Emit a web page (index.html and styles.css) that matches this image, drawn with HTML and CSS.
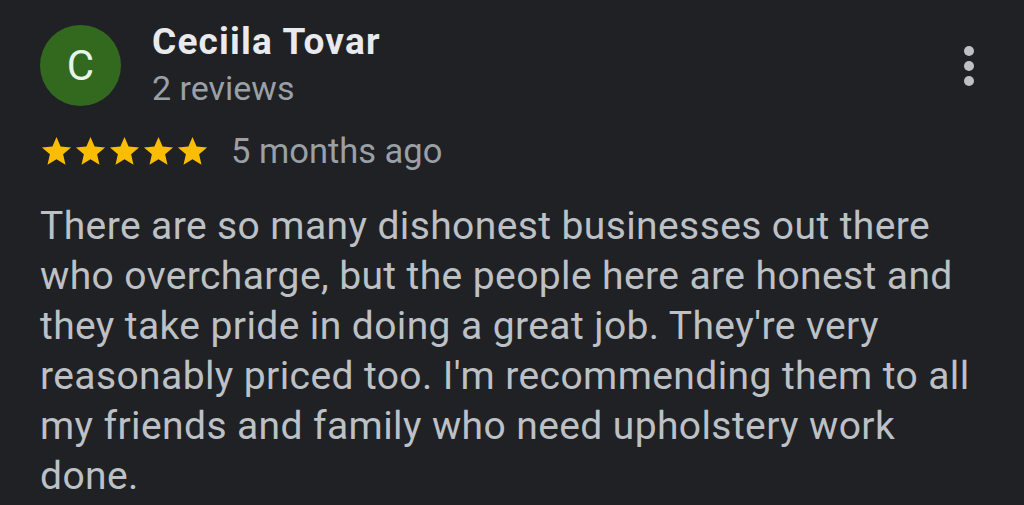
FILE: index.html
```html
<!DOCTYPE html>
<html>
<head>
<meta charset="utf-8">
<link rel="stylesheet" href="styles.css">
</head>
<body>
<div class="review">
  <div class="header">
    <div class="avatar">C</div>
    <div class="who">
      <div class="name">Ceciila Tovar</div>
      <div class="count">2 reviews</div>
    </div>
    <div class="more"><span></span><span></span><span></span></div>
  </div>
  <div class="meta">
    <div class="stars">
      <svg viewBox="0 0 24 24"><path d="M12 17.27L18.18 21l-1.64-7.03L22 9.24l-7.19-.61L12 2 9.19 8.63 2 9.24l5.46 4.73L5.82 21z"/></svg>
      <svg viewBox="0 0 24 24"><path d="M12 17.27L18.18 21l-1.64-7.03L22 9.24l-7.19-.61L12 2 9.19 8.63 2 9.24l5.46 4.73L5.82 21z"/></svg>
      <svg viewBox="0 0 24 24"><path d="M12 17.27L18.18 21l-1.64-7.03L22 9.24l-7.19-.61L12 2 9.19 8.63 2 9.24l5.46 4.73L5.82 21z"/></svg>
      <svg viewBox="0 0 24 24"><path d="M12 17.27L18.18 21l-1.64-7.03L22 9.24l-7.19-.61L12 2 9.19 8.63 2 9.24l5.46 4.73L5.82 21z"/></svg>
      <svg viewBox="0 0 24 24"><path d="M12 17.27L18.18 21l-1.64-7.03L22 9.24l-7.19-.61L12 2 9.19 8.63 2 9.24l5.46 4.73L5.82 21z"/></svg>
    </div>
    <span class="ago">5 months ago</span>
  </div>
  <p class="text">There are so many dishonest businesses out there who overcharge, but the people here are honest and they take pride in doing a great job. They're very reasonably priced too. I'm recommending them to all my friends and family who need upholstery work done.</p>
</div>
</body>
</html>
```
FILE: styles.css
```css
html, body {
  margin: 0;
  padding: 0;
  background: #202124;
  height: 100%;
  overflow: hidden;
}
body {
  font-family: Roboto, "Liberation Sans", sans-serif;
}
.review {
  padding: 25px 0 0 40px;
  width: 944px;
}
.header {
  display: flex;
  align-items: flex-start;
}
.avatar {
  width: 81px;
  height: 81px;
  border-radius: 50%;
  background: #33691e;
  color: #e6f4ea;
  font-size: 42px;
  display: flex;
  align-items: center;
  justify-content: center;
  flex: none;
}
.who {
  margin-left: 31px;
  flex: 1;
}
.name {
  color: #e8eaed;
  font-weight: 700;
  font-size: 37px;
  letter-spacing: 1.2px;
  line-height: 38px;
  margin-top: -2px;
}
.count {
  color: #9aa0a6;
  font-size: 34px;
  line-height: 38px;
  margin-top: 8px;
}
.more {
  display: flex;
  flex-direction: column;
  gap: 5px;
  margin-top: 21px;
  margin-right: 10px;
}
.more span {
  width: 10px;
  height: 10px;
  border-radius: 50%;
  background: #bdc1c6;
}
.meta {
  display: flex;
  align-items: center;
  margin-top: 24px;
}
.stars {
  display: flex;
}
.stars svg {
  width: 35px;
  height: 35px;
  fill: #fbbc04;
  margin-left: -1px;
}
.ago {
  color: #9aa0a6;
  font-size: 34.5px;
  margin-left: 21px;
}
.text {
  margin: 30px 0 0;
  color: #bdc1c6;
  font-size: 39px;
  letter-spacing: 0.4px;
  line-height: 50px;
}
```
